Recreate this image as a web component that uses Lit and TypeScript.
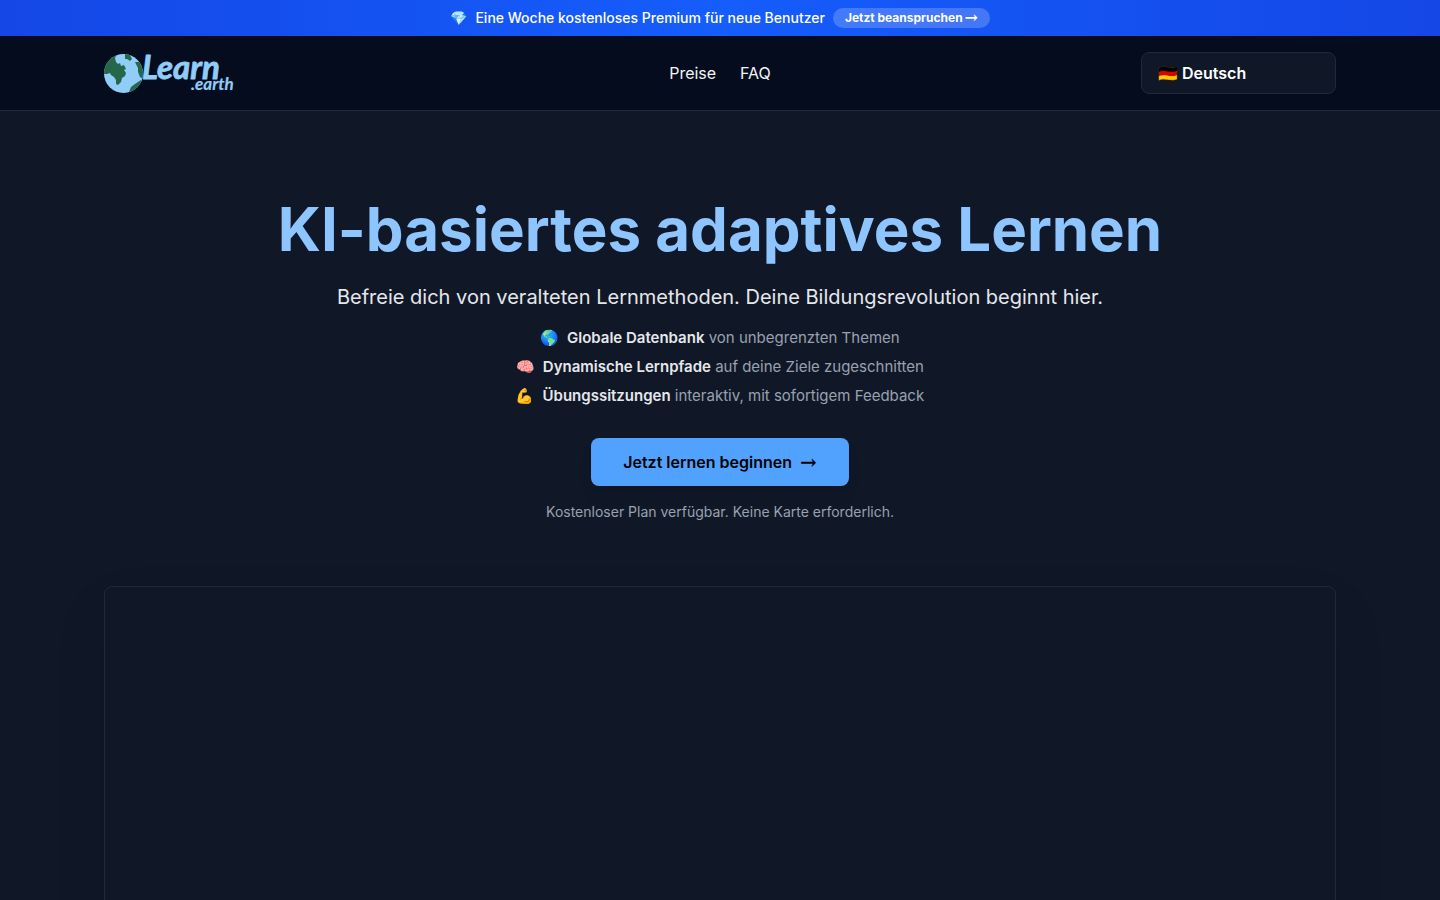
import { LitElement, html, css, svg } from "lit";
import { customElement } from "lit/decorators.js";

const benefits = [
  { icon: "🌎", title: "Globale Datenbank", text: "von unbegrenzten Themen" },
  { icon: "🧠", title: "Dynamische Lernpfade", text: "auf deine Ziele zugeschnitten" },
  { icon: "💪", title: "Übungssitzungen", text: "interaktiv, mit sofortigem Feedback" },
];

const globe = svg`
  <defs><clipPath id="disc"><circle cx="19.5" cy="21.5" r="19.5"/></clipPath></defs>
  <circle cx="19.5" cy="21.5" r="19.5" fill="#90cdf9"/>
  <g clip-path="url(#disc)" fill="#276749">
    <path d="M0 22 L0 10 L7 3 L13 2 L11 6 L12 10 L14 12 L16 11 L17 14 L20 13 L22 17 L20 18 L22 21 L21 24 L18 26 L17 30 L14 33 L12 32 L12 28 L10 25 L7 23 L6 21 L3 22Z"/>
    <path d="M21 1 L26 3 L28 7 L26 9 L23 7 L21 7Z"/>
    <path d="M31 10 L35 10 L39 16 L39 27 L36 25 L34 20 L34 16Z"/>
    <path d="M25 40 L27 35 L31 32 L37 28 L37 34 L31 39Z"/>
  </g>`;

@customElement("app-root")
export class AppRoot extends LitElement {
  static styles = css`
    :host {
      display: block;
      min-height: 100vh;
      background: #101828;
      color: #f3f4f6;
      font: 16px/24px Inter, "Noto Color Emoji", sans-serif;
    }
    * { box-sizing: border-box; }
    a { color: inherit; text-decoration: none; }
    .promo {
      display: flex;
      justify-content: center;
      align-items: center;
      gap: 8px;
      padding: 8px 16px;
      background: linear-gradient(90deg, #1447e6, #155dfc, #1447e6);
      color: #fff;
      font-size: 14px;
      line-height: 20px;
      font-weight: 500;
    }
    .claim {
      display: flex;
      align-items: center;
      gap: 2px;
      padding: 2px 12px;
      border-radius: 999px;
      background: rgba(255, 255, 255, 0.2);
      font-size: 12px;
      line-height: 16px;
      font-weight: 700;
    }
    .arrow { font-family: "DejaVu Serif", serif; font-weight: 700; }
    .claim .arrow { font-size: 16px; }
    .start .arrow { font-size: 20px; }
    .header {
      border-bottom: 1px solid #1e2939;
      background: #040c1e;
    }
    .bar {
      display: grid;
      grid-template-columns: 1fr auto 1fr;
      align-items: center;
      max-width: 1280px;
      margin: 0 auto;
      padding: 16px 24px;
    }
    .logo { display: block; width: 132px; height: 42px; }
    .logo svg { display: block; overflow: visible; }
    .word {
      fill: #90cdf9;
      stroke: #90cdf9;
      stroke-linejoin: round;
      font-family: Lato, sans-serif;
      font-weight: 700;
      font-style: italic;
    }
    .nav { display: flex; gap: 24px; }
    .language {
      appearance: none;
      justify-self: end;
      width: 195px;
      height: 42px;
      padding: 0 16px;
      border: 1px solid #1e2939;
      border-radius: 8px;
      background: #101828;
      color: #fff;
      font: inherit;
      font-weight: 600;
    }
    .hero {
      display: flex;
      flex-direction: column;
      align-items: center;
      max-width: 1280px;
      margin: 0 auto;
      padding: 88px 24px 64px;
      text-align: center;
    }
    h1 {
      margin: 0 0 24px;
      color: #8ec5ff;
      font-size: 60px;
      line-height: 60px;
      font-weight: 700;
    }
    .lead { margin: 0 0 16px; color: #e5e7eb; font-size: 20px; line-height: 28px; }
    .benefits {
      display: grid;
      gap: 8px;
      margin: 0 0 32px;
      padding: 0;
      list-style: none;
      color: #99a1af;
      font-size: 15px;
      line-height: 21px;
    }
    .benefits strong { color: #e5e7eb; font-weight: 600; }
    .icon { margin-right: 8px; }
    .start {
      display: flex;
      align-items: center;
      gap: 8px;
      padding: 12px 32px;
      border: 0;
      border-radius: 8px;
      background: #51a2ff;
      box-shadow: 0 10px 15px -3px rgba(0, 0, 0, 0.1), 0 4px 6px -4px rgba(0, 0, 0, 0.1);
      color: #000;
      font: inherit;
      font-weight: 600;
    }
    .note { margin: 16px 0 64px; color: #99a1af; font-size: 14px; line-height: 20px; }
    .preview {
      width: 100%;
      aspect-ratio: 16 / 9;
      border: 1px solid #1e2939;
      border-radius: 8px;
      box-shadow: 0 25px 50px -12px rgba(0, 0, 0, 0.25);
    }
  `;

  render() {
    return html`
      <div class="promo">
        <span>💎</span>
        <span>Eine Woche kostenloses Premium für neue Benutzer</span>
        <a class="claim" href="#claim"><span>Jetzt beanspruchen</span><span class="arrow">→</span></a>
      </div>
      <header class="header">
        <div class="bar">
          <a class="logo" href="#home" aria-label="Learn.earth">
            <svg width="132" height="42" viewBox="0 0 132 42">
              ${globe}
              <text class="word" x="38" y="27" font-size="33" stroke-width="0.8">Learn</text>
              <text class="word" x="87" y="38" font-size="17" stroke-width="0.2">.earth</text>
            </svg>
          </a>
          <nav class="nav">
            <a href="#pricing">Preise</a>
            <a href="#faq">FAQ</a>
          </nav>
          <select class="language" aria-label="Sprache">
            <option>🇩🇪 Deutsch</option>
          </select>
        </div>
      </header>
      <main class="hero">
        <h1>KI-basiertes adaptives Lernen</h1>
        <p class="lead">Befreie dich von veralteten Lernmethoden. Deine Bildungsrevolution beginnt hier.</p>
        <ul class="benefits">
          ${benefits.map(
            (b) => html`<li><span class="icon">${b.icon}</span><strong>${b.title}</strong> ${b.text}</li>`
          )}
        </ul>
        <button class="start" type="button"><span>Jetzt lernen beginnen</span><span class="arrow">→</span></button>
        <p class="note">Kostenloser Plan verfügbar. Keine Karte erforderlich.</p>
        <div class="preview"></div>
      </main>
    `;
  }
}
